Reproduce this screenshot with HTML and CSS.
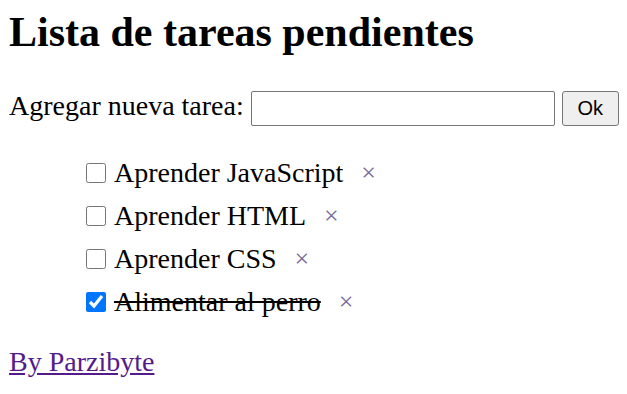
FILE: index.html
```html
<!DOCTYPE html>
<html lang="es">
<head>
    <meta charset="UTF-8">
    <meta name="viewport" content="width=device-width, initial-scale=1.0">
    <title>Lista de tareas</title>
    <link rel="stylesheet" href="styles.css">
</head>
<body>
    <h1>Lista de tareas pendientes</h1>

    <!-- Formulario para agregar -->
    <form class="nueva-tarea">
        <label for="tarea">Agregar nueva tarea:</label>
        <input type="text" id="tarea" class="campo">
        <button type="button" class="boton">Ok</button>
    </form>

    <!-- Lista -->
    <ul class="lista">
        <li class="tarea"><input type="checkbox" class="check"><span>Aprender JavaScript</span><a class="eliminar">&times;</a></li>
        <li class="tarea"><input type="checkbox" class="check"><span>Aprender HTML</span><a class="eliminar">&times;</a></li>
        <li class="tarea"><input type="checkbox" class="check"><span>Aprender CSS</span><a class="eliminar">&times;</a></li>
        <li class="tarea hecha"><input type="checkbox" class="check" checked><span>Alimentar al perro</span><a class="eliminar">&times;</a></li>
    </ul>

    <a href="#" class="autor">By Parzibyte</a>
</body>
</html>
```

FILE: styles.css
```css
body {
    margin: 8px 6px 8px 9px;
    font-family: "Liberation Serif", "Times New Roman", serif;
    font-size: 28px;
    color: #000;
    background: #fff;
}
h1 {
    margin: 0;
    font-size: 42px;
    line-height: 48px;
}
.nueva-tarea {
    margin-top: 34px;
    white-space: nowrap;
}
.campo {
    width: 304px;
    height: 35px;
    box-sizing: border-box;
    border: 1px solid #767676;
    border-radius: 2px;
    font-size: 20px;
    vertical-align: middle;
}
.boton {
    height: 35px;
    width: 57px;
    font-family: "Liberation Sans", Arial, sans-serif;
    font-size: 20px;
    background: #efefef;
    border: 1px solid #767676;
    border-radius: 3px;
    vertical-align: middle;
}
.lista {
    margin: 25px 0 0;
    padding-left: 75px;
    list-style: none;
}
.tarea {
    display: flex;
    align-items: center;
    height: 43px;
}
.check {
    width: 20px;
    height: 20px;
    margin: 0 8px 0 2px;
    accent-color: #0075ff;
}
.hecha span {
    text-decoration: line-through;
}
.eliminar {
    margin-left: 18px;
    font-size: 26px;
    color: #7a6a9a;
    cursor: pointer;
}
.autor {
    display: inline-block;
    margin-top: 23px;
    color: #551a8b;
}
```
